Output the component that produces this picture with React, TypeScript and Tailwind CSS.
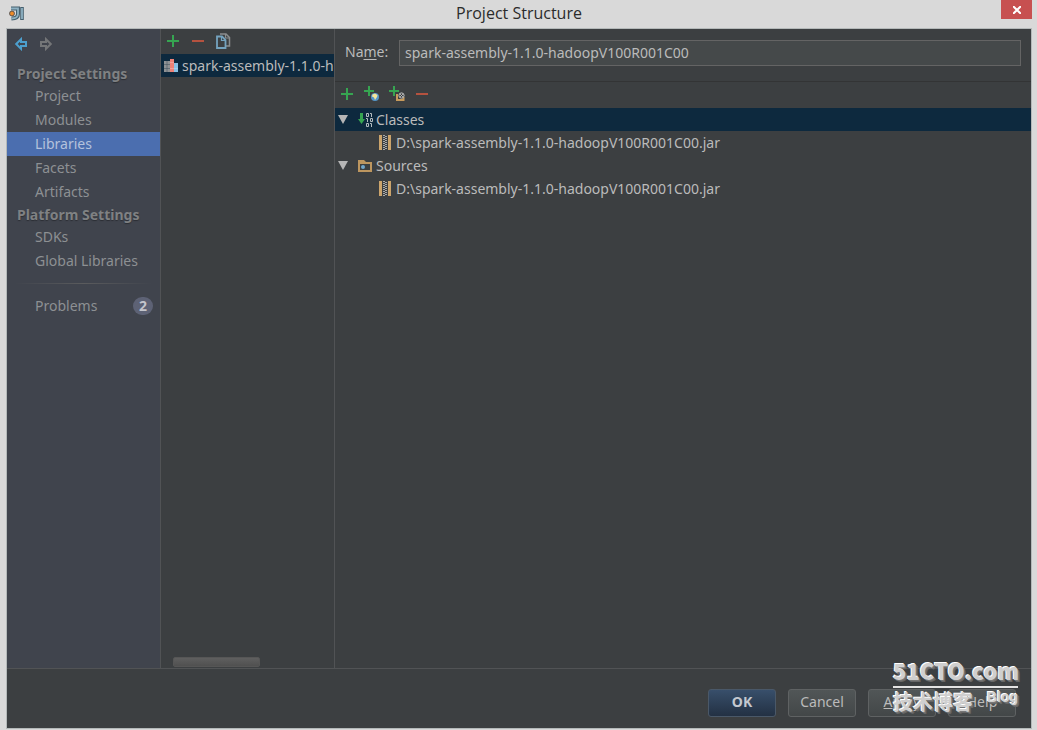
import clsx from 'clsx';
import type { ReactNode } from 'react';

type SidebarSection = {
    title: string;
    items: string[];
};

const SECTIONS: SidebarSection[] = [
    { title: 'Project Settings', items: ['Project', 'Modules', 'Libraries', 'Facets', 'Artifacts'] },
    { title: 'Platform Settings', items: ['SDKs', 'Global Libraries'] },
];

const LIBRARY_NAME = 'spark-assembly-1.1.0-hadoopV100R001C00';
const JAR_PATH = 'D:\\spark-assembly-1.1.0-hadoopV100R001C00.jar';

const AppLogo = () => (
    <svg width="16" height="16" viewBox="0 0 16 16" fill="none">
        <path d="M2 2.500h7v5.500q0 4.500-6.500 4.500" stroke="#46606f" strokeWidth="4" />
        <path d="M13 1v13" stroke="#46606f" strokeWidth="3.600" />
        <path d="M2 2.500h7v5.500q0 4.500-6.500 4.500" stroke="#8eb2c3" strokeWidth="1.800" />
        <path d="M13 2v11" stroke="#8eb2c3" strokeWidth="1.800" />
        <circle cx="3" cy="7.500" r="2.800" fill="#5d5148" />
        <circle cx="3" cy="7.500" r="1.900" fill="#f08c28" />
    </svg>
);

const ArrowIcon = ({ color, flipped }: { color: string; flipped?: boolean }) => (
    <svg width="14" height="14" viewBox="0 0 14 14" fill="none" className={clsx(flipped && '-scale-x-100')}>
        <path d="M7 2.200 2.200 7 7 11.800V9h5V5H7z" stroke={color} strokeWidth="2" />
    </svg>
);

const PlusIcon = () => (
    <svg width="12" height="12" viewBox="0 0 12 12">
        <path d="M5 0h2v5h5v2H7v5H5V7H0V5h5z" fill="#36a551" />
    </svg>
);

const MinusIcon = () => (
    <svg width="12" height="12" viewBox="0 0 12 12">
        <path d="M0 5h12v2H0z" fill="#b5523f" />
    </svg>
);

const CopyIcon = () => (
    <svg width="15" height="16" viewBox="0 0 15 16" fill="none">
        <path d="M4 1h6l3.500 3.500V13H10" stroke="#8a8d8e" strokeWidth="1.500" />
        <path d="M9.500 1v4H14" stroke="#8a8d8e" strokeWidth="1.200" />
        <path d="M1 3.500h5L9.500 7v8H1z" fill="#3c3f41" stroke="#74a3bf" strokeWidth="1.800" />
        <path d="M5.500 3.500v4h4" stroke="#74a3bf" strokeWidth="1.200" />
    </svg>
);

const PlusGlobeIcon = () => (
    <svg width="16" height="16" viewBox="0 0 16 16">
        <path d="M4 0h2v4h4v2H6v4H4V6H0V4h4z" fill="#36a551" />
        <circle cx="11" cy="11" r="4" fill="#5596c8" />
        <path d="M8.500 8.500 11 7.500l2.500 1.500-.500 2-2 3-1-2.500-2-1z" fill="#f3e59a" />
    </svg>
);

const PlusArchiveIcon = () => (
    <svg width="16" height="16" viewBox="0 0 16 16" fill="none">
        <path d="M4 0h2v4h4v2H6v4H4V6H0V4h4z" fill="#36a551" />
        <path d="M8 8v6h6.500V11" stroke="#c79a5b" strokeWidth="2" />
        <circle cx="12.500" cy="9.500" r="2.600" fill="#3c3f41" stroke="#c5c5c5" />
        <path d="m11 8 3 3m0-3-3 3" stroke="#c5c5c5" strokeWidth=".8" />
    </svg>
);

const LibraryIcon = () => (
    <svg width="14" height="14" viewBox="0 0 14 14">
        <path d="M0 2h6v11H0z" fill="#8f9294" />
        <path d="M6 0h4v13H6z" fill="#ee8277" />
        <path d="M10 4h4v9h-4z" fill="#87c1e6" />
        <path d="M0 5.500h6M0 9.500h6M3 2v11" stroke="#3a4b58" strokeOpacity=".5" />
        <path d="M6 3.500h4M6 9.500h8" stroke="#ffffff" strokeOpacity=".25" />
    </svg>
);

const ClassesIcon = () => (
    <svg width="16" height="16" viewBox="0 0 16 16" fill="none">
        <path d="M2 1h3v6h2l-3.500 5L0 7h2z" fill="#36a551" />
        <g stroke="#b4bcc0">
            <path d="M8.500 1.500h2v3h-2zM8.500 11.500h2v3h-2zM12.500 6.500h2v3h-2z" />
            <path d="M12 1.500h1.500V5M8 6.500h1.500V10M12 11.500h1.500V15" />
        </g>
    </svg>
);

const SourcesIcon = () => (
    <svg width="14" height="12" viewBox="0 0 14 12" fill="none">
        <path d="M1 3h12v8H1z" stroke="#bd965f" strokeWidth="2" />
        <path d="M0 0h6l2 2H0z" fill="#bd965f" />
        <circle cx="5" cy="7" r="2" fill="#72a7cb" />
    </svg>
);

const JarIcon = () => (
    <svg width="12" height="15" viewBox="0 0 12 15">
        <path d="M0 0h3v15H0zM9 0h3v15H9z" fill="#cba46c" />
        <path d="M5 0v15" stroke="#a9aaab" strokeWidth="2" strokeDasharray="1 1" />
        <path d="M7 1v14" stroke="#a9aaab" strokeWidth="2" strokeDasharray="1 1" />
    </svg>
);

const IconButton = ({ label, children }: { label: string; children: ReactNode }) => (
    <button aria-label={label} className="flex w-4 items-center justify-center">
        {children}
    </button>
);

const Sidebar = () => (
    <nav className="w-[154px] shrink-0 border-r border-[#515355] bg-[#40444d] text-[#8d9093]">
        <div className="flex h-[34px] items-center gap-[11px] pb-[5px] pl-[7px]">
            <button aria-label="Back">
                <ArrowIcon color="#4c9fce" />
            </button>
            <button aria-label="Forward">
                <ArrowIcon color="#747678" flipped />
            </button>
        </div>
        {SECTIONS.map((section) => (
            <section key={section.title}>
                <h2 className="pl-[10px] font-bold leading-[21px] text-[#7f8183] [text-shadow:0_1px_1px_#2b2e34]">
                    {section.title}
                </h2>
                {section.items.map((item) => (
                    <button
                        key={item}
                        className={clsx(
                            'block h-6 w-full pl-7 text-left leading-6',
                            item === 'Libraries' && 'bg-[#4b6eaf] text-[#b4c2dc]',
                        )}
                    >
                        {item}
                    </button>
                ))}
            </section>
        ))}
        <div className="mx-2 my-[10px] h-px bg-linear-to-r from-transparent via-[#5a5b5d] to-transparent" />
        <button className="flex h-6 w-full items-center justify-between pr-[7px] pl-7">
            Problems
            <span className="h-[18px] w-5 rounded-full bg-[#5d6275] text-center font-bold leading-[18px] text-[#c3c5cc]">
                2
            </span>
        </button>
    </nav>
);

const LibraryList = () => (
    <div className="flex w-[174px] shrink-0 flex-col border-r border-[#515355]">
        <div className="flex h-[25px] items-center gap-[9px] pb-[2px] pl-1">
            <IconButton label="New library">
                <PlusIcon />
            </IconButton>
            <IconButton label="Delete">
                <MinusIcon />
            </IconButton>
            <IconButton label="Copy">
                <CopyIcon />
            </IconButton>
        </div>
        <button className="flex h-[23px] items-center gap-1 overflow-hidden bg-[#0d293e] pl-[3px] text-left whitespace-nowrap">
            <span className="shrink-0">
                <LibraryIcon />
            </span>
            {LIBRARY_NAME}
        </button>
        <div className="mt-auto mb-px ml-3 h-[10px] w-[87px] rounded-xs border border-[#565656] bg-linear-to-b from-[#5f5f5f] to-[#505050]" />
    </div>
);

type TreeGroupProps = {
    label: string;
    icon: ReactNode;
    selected?: boolean;
};

const TreeGroup = ({ label, icon, selected }: TreeGroupProps) => (
    <li>
        <button className={clsx('flex h-[23px] w-full items-center pl-[3px]', selected && 'bg-[#0d293e]')}>
            <svg width="10" height="9" viewBox="0 0 10 9">
                <path d="M0 0h10L5 9z" fill="#b6b6b6" />
            </svg>
            <span className="mr-[2px] ml-[10px] w-4">{icon}</span>
            {label}
        </button>
        <ul>
            <li className="flex h-[23px] items-center gap-[5px] pl-11">
                <JarIcon />
                {JAR_PATH}
            </li>
        </ul>
    </li>
);

const LibraryDetails = () => (
    <div className="min-w-0 flex-1">
        <div className="flex h-[53px] items-start border-b border-[#333435] pt-[11px] pr-[10px] pl-[10px]">
            <label htmlFor="library-name" className="w-[54px] leading-6">
                Na<span className="underline underline-offset-2">m</span>e:
            </label>
            <input
                id="library-name"
                defaultValue={LIBRARY_NAME}
                className="h-[26px] min-w-0 flex-1 border border-[#646464] bg-[#45494a] px-[5px] pb-[2px] outline-none"
            />
        </div>
        <div className="flex h-[26px] items-center gap-[9px] pb-[2px] pl-1">
            <IconButton label="Add">
                <PlusIcon />
            </IconButton>
            <IconButton label="Specify documentation URL">
                <PlusGlobeIcon />
            </IconButton>
            <IconButton label="Exclude">
                <PlusArchiveIcon />
            </IconButton>
            <IconButton label="Remove">
                <MinusIcon />
            </IconButton>
        </div>
        <ul>
            <TreeGroup label="Classes" icon={<ClassesIcon />} selected />
            <TreeGroup label="Sources" icon={<SourcesIcon />} />
        </ul>
    </div>
);

const DialogButton = ({ primary, children }: { primary?: boolean; children: ReactNode }) => (
    <button
        className={clsx(
            'h-7 w-[68px] rounded-[3px] border bg-linear-to-b pb-[2px]',
            primary
                ? 'border-[#4a5868] from-[#384f6b] to-[#233143] font-bold text-[#c3c8d0]'
                : 'border-[#5f6263] from-[#515657] to-[#434748]',
        )}
    >
        {children}
    </button>
);

const Watermark = () => (
    <div className="pointer-events-none absolute right-[13px] bottom-3 w-[125px] text-[#cfcfcf] [text-shadow:-1px_-1px_0_#fff,1px_1px_0_#777,2px_2px_0_#666]">
        <div className="border-b-2 border-[#e4e4e4] font-['Noto_Sans_CJK_SC',sans-serif] text-[22px] leading-[31px] font-black">
            51CTO.com
        </div>
        <div className="flex justify-between font-bold">
            <span className="font-['Noto_Sans_CJK_SC',sans-serif] text-[20px] leading-[28px]">技术博客</span>
            <span className="font-['Liberation_Sans',sans-serif] text-[14px] leading-[18px]">Blog</span>
        </div>
    </div>
);

const App = () => (
    <div className="flex h-screen flex-col bg-[#d9d9d9] pr-[5px] pb-px pl-[6px] font-['Noto_Sans',sans-serif] text-sm text-[#bbbbbb]">
        <header className="flex h-7 shrink-0 items-start text-[#2b2b2b]">
            <div className="w-[31px] pt-[6px] pl-[3px]">
                <AppLogo />
            </div>
            <h1 className="flex-1 text-center font-['Open_Sans',sans-serif] text-base leading-[26px]">
                Project Structure
            </h1>
            <button aria-label="Close" className="flex h-[19px] w-[31px] items-center justify-center bg-[#c75050]">
                <svg width="8" height="8" viewBox="0 0 8 8">
                    <path d="m0 0 8 8M8 0 0 8" stroke="#fff" strokeWidth="2" />
                </svg>
            </button>
        </header>
        <main className="relative flex min-h-0 flex-1 flex-col border border-[#b4b9b9] bg-[#3c3f41]">
            <div className="flex min-h-0 flex-1">
                <Sidebar />
                <LibraryList />
                <LibraryDetails />
            </div>
            <footer className="flex h-[60px] shrink-0 items-start justify-end gap-3 border-t border-[#515355] pt-5 pr-[15px]">
                <DialogButton primary>OK</DialogButton>
                <DialogButton>Cancel</DialogButton>
                <DialogButton>
                    <span className="underline">A</span>pply
                </DialogButton>
                <DialogButton>Help</DialogButton>
            </footer>
            <Watermark />
        </main>
    </div>
);

export default App;
